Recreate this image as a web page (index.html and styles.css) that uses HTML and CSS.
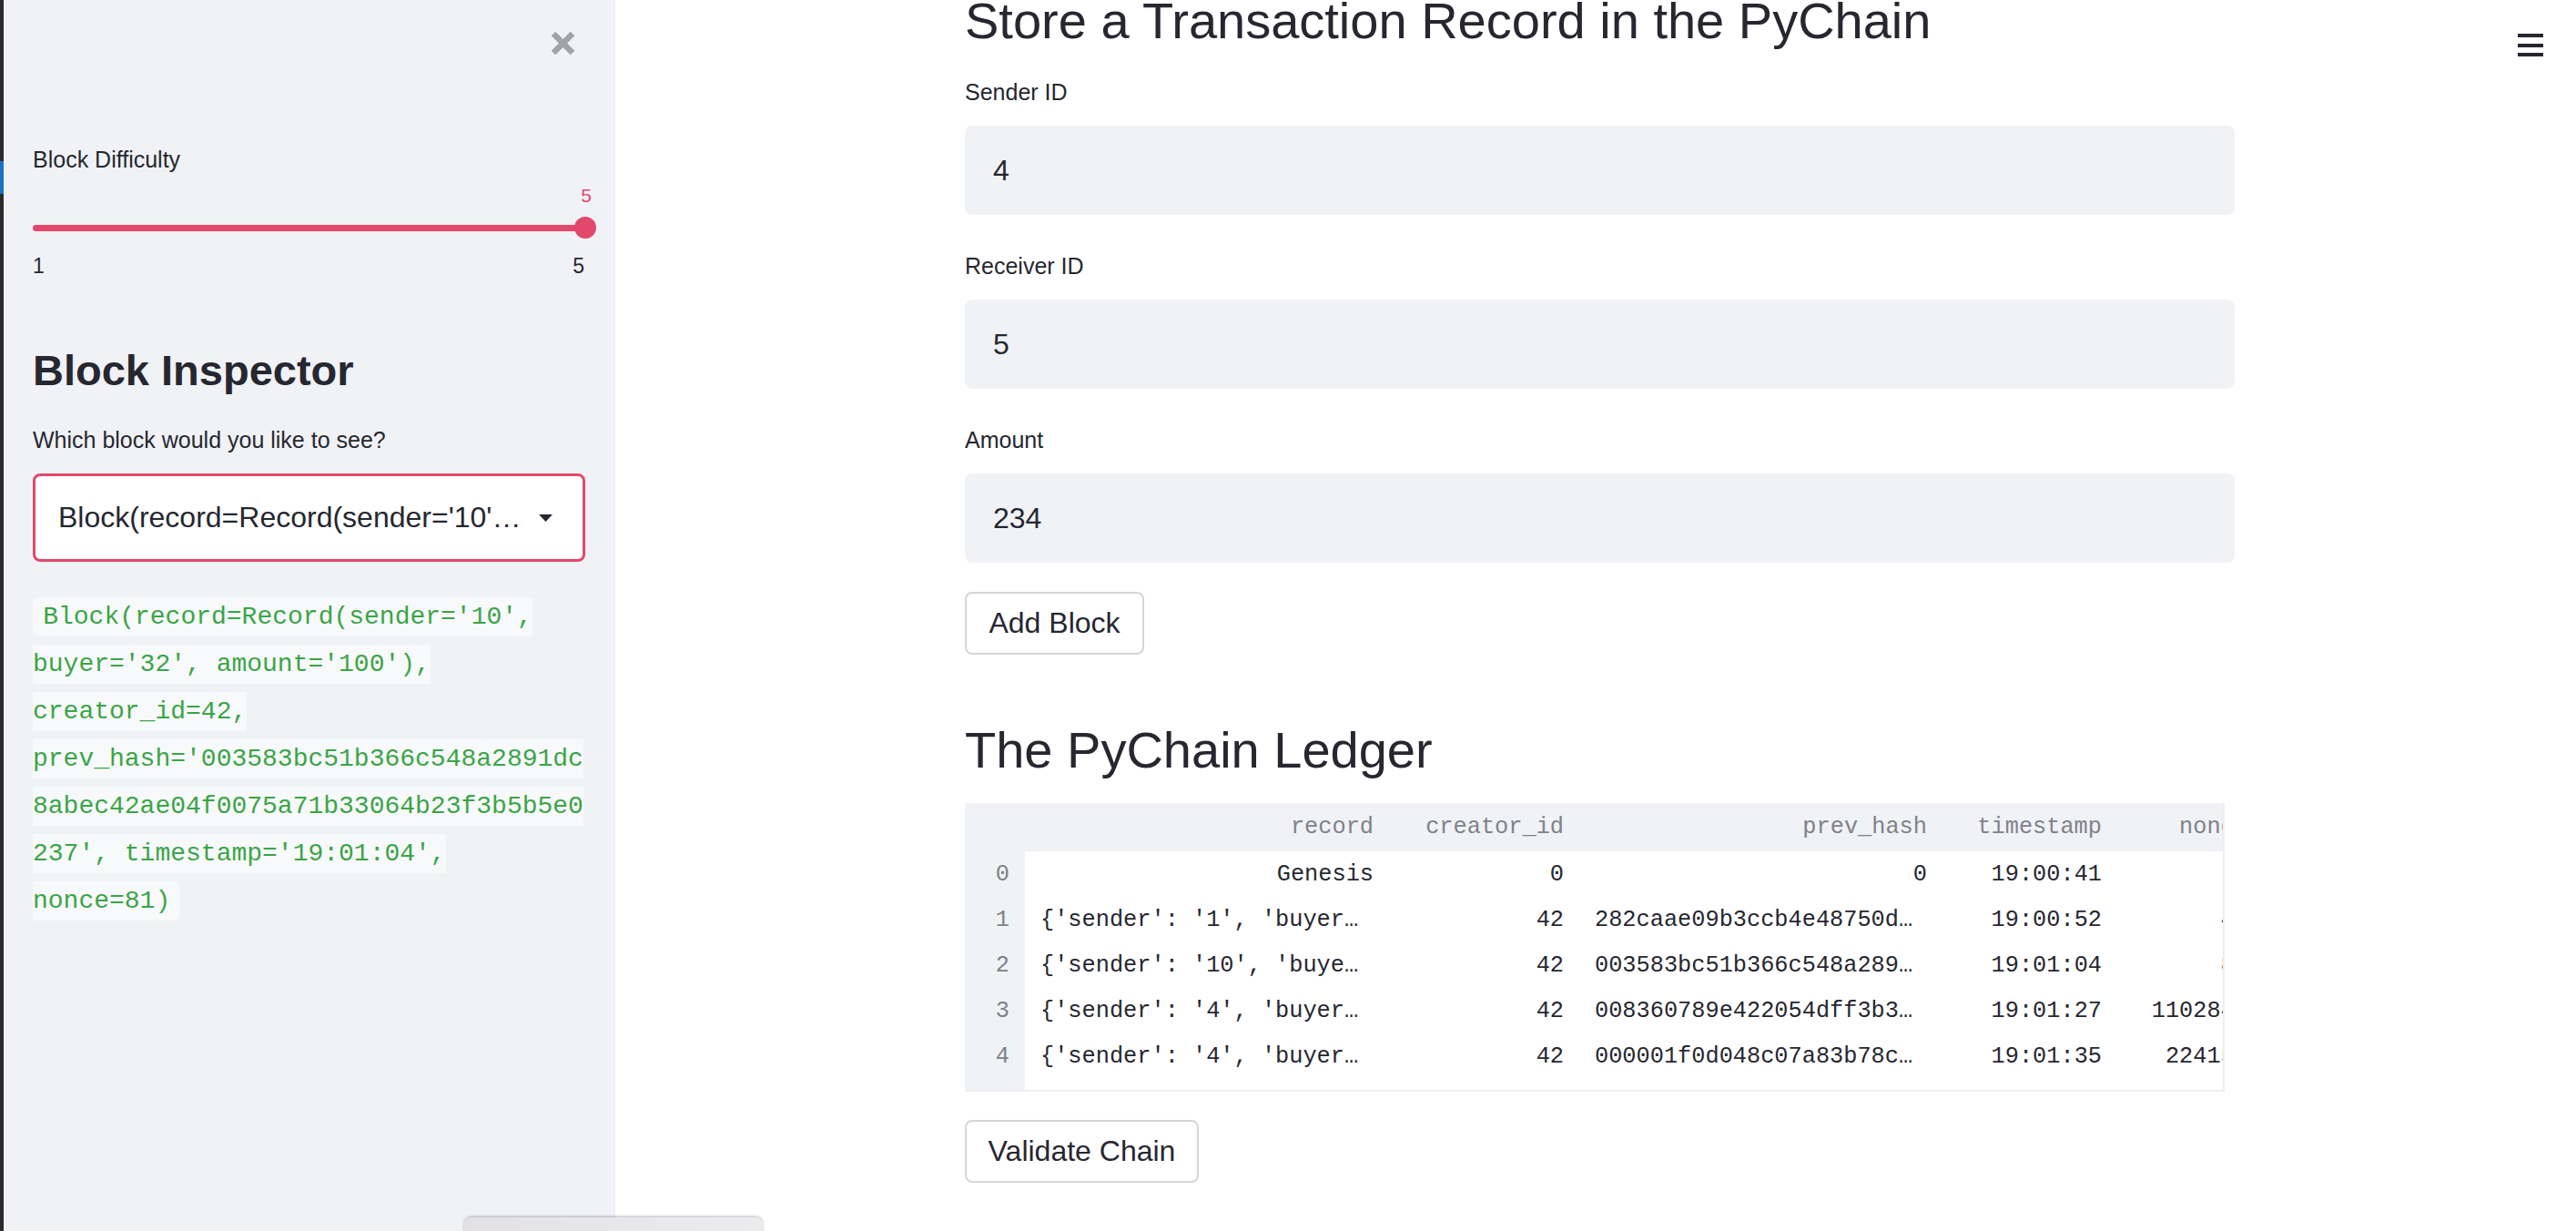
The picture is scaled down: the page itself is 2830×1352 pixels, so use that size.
FILE: index.html
```html
<!DOCTYPE html>
<html lang="en">
<head>
<meta charset="utf-8">
<title>PyChain</title>
<link rel="stylesheet" href="styles.css">
</head>
<body>
<div class="edge"><div class="edge-blue"></div></div>
<aside class="sidebar">
  <div class="close-row">
    <svg class="close" width="29" height="29" viewBox="0 0 29 29"><path d="M4 4 L25 25 M25 4 L4 25" stroke="#a2a3a8" stroke-width="6.5" fill="none"/></svg>
  </div>
  <div class="label lbl-diff">Block Difficulty</div>
  <div class="slider">
    <div class="slider-value">5</div>
    <div class="track-row"><div class="track"></div><div class="thumb"></div></div>
    <div class="ticks"><span>1</span><span>5</span></div>
  </div>
  <h2 class="side-h">Block Inspector</h2>
  <div class="label lbl-which">Which block would you like to see?</div>
  <div class="select">
    <span class="select-text">Block(record=Record(sender='10'…</span>
    <svg class="caret" width="15" height="8" viewBox="0 0 15 8"><path d="M0 0 L15 0 L7.5 8 Z" fill="#262730"/></svg>
  </div>
  <p class="code-p"><code class="code">Block(record=Record(sender='10', buyer='32', amount='100'), creator_id=42, prev_hash='003583bc51b366c548a2891dc8abec42ae04f0075a71b33064b23f3b5b5e0237', timestamp='19:01:04', nonce=81)</code></p>
</aside>
<main class="main">
  <div class="content">
    <h1 class="title">Store a Transaction Record in the PyChain</h1>
    <div class="field first">
      <div class="label">Sender ID</div>
      <div class="input">4</div>
    </div>
    <div class="field">
      <div class="label">Receiver ID</div>
      <div class="input">5</div>
    </div>
    <div class="field">
      <div class="label">Amount</div>
      <div class="input">234</div>
    </div>
    <div class="btn btn-add">Add Block</div>
    <h2 class="title ledger">The PyChain Ledger</h2>
    <div class="table-wrap">
      <table class="df">
        <colgroup>
          <col class="c-idx"><col class="c-rec"><col class="c-cre"><col class="c-prev"><col class="c-ts"><col class="c-non">
        </colgroup>
        <thead>
          <tr><th class="idx"></th><th>record</th><th>creator_id</th><th>prev_hash</th><th>timestamp</th><th>nonce</th></tr>
        </thead>
        <tbody>
          <tr><td class="idx">0</td><td>Genesis</td><td>0</td><td>0</td><td>19:00:41</td><td>0</td></tr>
          <tr><td class="idx">1</td><td class="tl">{'sender': '1', 'buyer…</td><td>42</td><td class="tl">282caae09b3ccb4e48750d…</td><td>19:00:52</td><td>47</td></tr>
          <tr><td class="idx">2</td><td class="tl">{'sender': '10', 'buye…</td><td>42</td><td class="tl">003583bc51b366c548a289…</td><td>19:01:04</td><td>81</td></tr>
          <tr><td class="idx">3</td><td class="tl">{'sender': '4', 'buyer…</td><td>42</td><td class="tl">008360789e422054dff3b3…</td><td>19:01:27</td><td>1102846</td></tr>
          <tr><td class="idx">4</td><td class="tl">{'sender': '4', 'buyer…</td><td>42</td><td class="tl">000001f0d048c07a83b78c…</td><td>19:01:35</td><td>224159</td></tr>
          <tr class="spacer"><td class="idx"></td><td></td><td></td><td></td><td></td><td></td></tr>
        </tbody>
      </table>
    </div>
    <div class="btn btn-validate">Validate Chain</div>
  </div>
</main>
<div class="menu-btn"><span></span><span></span><span></span></div>
<div class="popup"></div>
</body>
</html>
```
FILE: styles.css
```css
* { box-sizing: border-box; }
html, body { margin: 0; padding: 0; }
body {
  width: 2830px;
  height: 1352px;
  overflow: hidden;
  display: flex;
  background: #ffffff;
  color: #262730;
  font-family: "Liberation Sans", Arial, sans-serif;
}

.edge {
  width: 4px;
  flex: 0 0 4px;
  background: #2b2b2d;
}
.edge-blue {
  margin-top: 177px;
  height: 36px;
  background: #1a72c4;
}

/* Sidebar */
.sidebar {
  flex: 0 0 672px;
  width: 672px;
  background: #f0f2f6;
  padding: 0 33px 0 32px;
}
.close-row {
  display: flex;
  justify-content: flex-end;
  padding-top: 33px;
  padding-right: 10px;
  height: 62px;
}
.close { display: block; }

.label {
  font-size: 25px;
  line-height: 36px;
  height: 36px;
  color: #262730;
}
.lbl-diff { margin-top: 95px; }

.slider-value {
  margin-top: 7px;
  height: 30px;
  font-size: 21px;
  line-height: 30px;
  color: #e2486b;
  text-align: right;
  margin-right: -7px;
}
.track-row {
  position: relative;
  margin-top: 8px;
  height: 24px;
  display: flex;
  align-items: center;
}
.track {
  width: 100%;
  height: 7px;
  border-radius: 4px;
  background: #e2486b;
}
.thumb {
  position: absolute;
  right: -12px;
  top: 0;
  width: 24px;
  height: 24px;
  border-radius: 50%;
  background: #e2486b;
}
.ticks {
  margin-top: 13px;
  height: 34px;
  display: flex;
  justify-content: space-between;
  font-size: 23px;
  line-height: 34px;
  padding-right: 1px;
  color: #262730;
}

.side-h {
  margin: 70px 0 0;
  font-size: 47px;
  line-height: 56px;
  height: 56px;
  font-weight: 700;
  color: #262730;
}
.lbl-which { margin-top: 30px; }

.select {
  margin-top: 19px;
  height: 97px;
  border: 3px solid #e2486b;
  border-radius: 8px;
  background: #ffffff;
  display: flex;
  align-items: center;
  padding: 0 33px 0 25px;
}
.select-text {
  font-size: 32px;
  color: #262730;
  white-space: nowrap;
}
.caret { margin-left: auto; display: block; }

.code-p {
  margin: 36px 0 0;
  line-height: 50px;
  overflow-wrap: break-word;
  word-wrap: break-word;
}
.code {
  font-family: "Liberation Mono", "Courier New", monospace;
  font-size: 28px;
  color: #3aa547;
  background: #f8f9fb;
  padding: 0.2em 0.4em;
  border-radius: 8px;
  -webkit-box-decoration-break: slice;
  box-decoration-break: slice;
}

/* Main */
.main {
  flex: 1 1 auto;
  min-width: 0;
}
.content {
  width: 1779px;
  padding-left: 384px;
}
.content > * { width: 1395px; }
.title {
  margin: -11px 0 0;
  font-size: 56px;
  line-height: 67px;
  height: 67px;
  font-weight: 400;
  color: #262730;
  white-space: nowrap;
}
.field { margin-top: 38px; }
.field.first { margin-top: 27px; }
.input {
  margin-top: 19px;
  height: 98px;
  background: #f0f2f6;
  border-radius: 8px;
  display: flex;
  align-items: center;
  padding-left: 31px;
  font-size: 32px;
  color: #262730;
}

.btn {
  display: flex;
  align-items: center;
  justify-content: center;
  height: 69px;
  border: 2px solid #d6d6d9;
  border-radius: 8px;
  background: #ffffff;
  font-size: 32px;
  color: #262730;
}
.content > .btn-add { width: 197px; margin-top: 32px; }
.content > .btn-validate { width: 257px; margin-top: 31px; }

.title.ledger { margin-top: 71px; }

.table-wrap {
  margin-top: 25px;
  overflow: hidden;
  border-bottom: 2px solid #eceef2;
  border-right: 2px solid #eceef2;
}
.content > .table-wrap { width: 1384px; }
.df {
  table-layout: fixed;
  width: 1427px;
  border-collapse: collapse;
  border-spacing: 0;
  font-family: "Liberation Mono", "Courier New", monospace;
  font-size: 25.3px;
}
.c-idx { width: 66px; }
.c-rec { width: 400px; }
.c-cre { width: 209px; }
.c-prev { width: 399px; }
.c-ts { width: 192px; }
.c-non { width: 161px; }
.df th, .df td {
  padding: 0 17px;
  text-align: right;
  white-space: nowrap;
  overflow: hidden;
}
.df thead th {
  height: 53px;
  background: #f0f2f6;
  color: #808289;
  font-weight: 400;
}
.df td {
  height: 50px;
  color: #262730;
}
.df td.tl { text-align: left; }
.df .idx {
  background: #f0f2f6;
  color: #808289;
}
.df tr.spacer td { height: 12px; }

/* overlays */
.menu-btn {
  position: absolute;
  left: 2766px;
  top: 37px;
  width: 28px;
  display: flex;
  flex-direction: column;
  gap: 6.5px;
}
.menu-btn span {
  display: block;
  height: 4px;
  background: #262730;
}
.popup {
  position: absolute;
  left: 510px;
  top: 1337px;
  width: 328px;
  height: 30px;
  border-radius: 8px;
  background: linear-gradient(90deg, #e3e1e6, #ecebee);
  box-shadow: 0 -1px 3px rgba(0,0,0,0.28);
}
```
